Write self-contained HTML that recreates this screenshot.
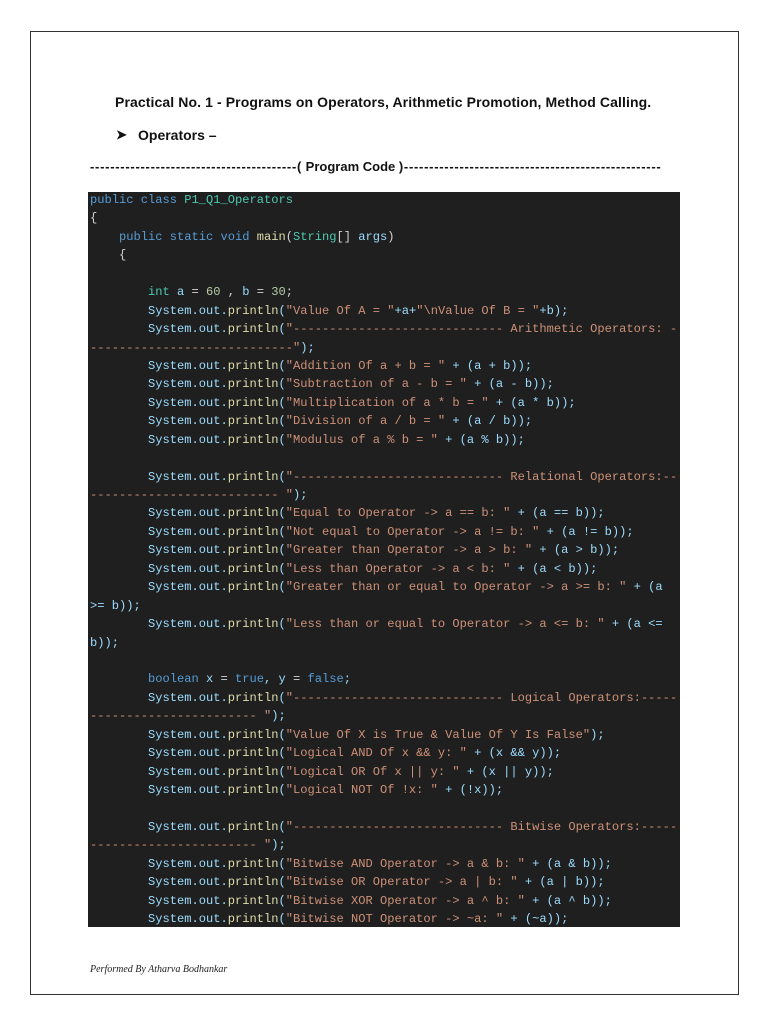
<!DOCTYPE html>
<html><head><meta charset="utf-8"><style>
body{margin:0;background:#fff;width:768px;height:1024px;position:relative;overflow:hidden}
.frame{position:absolute;left:30px;top:31px;width:707px;height:962px;border:1px solid #333}
.t{position:absolute;font-family:"Liberation Sans",sans-serif;font-weight:bold;color:#111;white-space:nowrap}
.code{position:absolute;left:88px;top:192px;width:592px;height:735px;background:#1f1f1f}
pre{position:absolute;left:90px;top:191px;margin:0;font-family:"Liberation Mono",monospace;font-size:12.08px;line-height:18.43px;color:#9cdcfe;white-space:pre}
.k{color:#569cd6}.c{color:#4ec9b0}.m{color:#dcdcaa}.s{color:#ce9178}.n{color:#b5cea8}.p{color:#d4d4d4}
.foot{position:absolute;left:90px;top:964px;font-family:"Liberation Serif",serif;font-style:italic;font-size:10px;color:#222}
</style></head><body>
<div class="frame"></div>
<div class="t" style="left:115px;top:94px;font-size:14px;letter-spacing:0.1px">Practical No. 1 - Programs on Operators, Arithmetic Promotion, Method Calling.</div>
<div class="t" style="left:116px;top:127px;font-size:13px">&#10148;</div>
<div class="t" style="left:138px;top:127px;font-size:14px">Operators –</div>
<div class="t" style="left:90px;top:159px;font-size:13px;letter-spacing:0.72px">-----------------------------------------(<span style="letter-spacing:0">&nbsp;Program Code&nbsp;</span>)---------------------------------------------------</div>
<div class="code"></div>
<pre><span class="k">public class</span> <span class="c">P1_Q1_Operators</span>
<span class="p">{</span>
    <span class="k">public static void</span> <span class="m">main</span><span class="p">(</span><span class="c">String</span><span class="p">[]</span> args<span class="p">)</span>
    <span class="p">{</span>

        <span class="c">int</span> a <span class="p">=</span> <span class="n">60</span> <span class="p">,</span> b <span class="p">=</span> <span class="n">30</span><span class="p">;</span>
        System.out.<span class="m">println</span>(<span class="s">"Value Of A = "</span>+a+<span class="s">"\nValue Of B = "</span>+b);
        System.out.<span class="m">println</span>(<span class="s">"----------------------------- Arithmetic Operators: -</span>
<span class="s">----------------------------"</span>);
        System.out.<span class="m">println</span>(<span class="s">"Addition Of a + b = "</span> + (a + b));
        System.out.<span class="m">println</span>(<span class="s">"Subtraction of a - b = "</span> + (a - b));
        System.out.<span class="m">println</span>(<span class="s">"Multiplication of a * b = "</span> + (a * b));
        System.out.<span class="m">println</span>(<span class="s">"Division of a / b = "</span> + (a / b));
        System.out.<span class="m">println</span>(<span class="s">"Modulus of a % b = "</span> + (a % b));

        System.out.<span class="m">println</span>(<span class="s">"----------------------------- Relational Operators:--</span>
<span class="s">-------------------------- "</span>);
        System.out.<span class="m">println</span>(<span class="s">"Equal to Operator -&gt; a == b: "</span> + (a == b));
        System.out.<span class="m">println</span>(<span class="s">"Not equal to Operator -&gt; a != b: "</span> + (a != b));
        System.out.<span class="m">println</span>(<span class="s">"Greater than Operator -&gt; a &gt; b: "</span> + (a &gt; b));
        System.out.<span class="m">println</span>(<span class="s">"Less than Operator -&gt; a &lt; b: "</span> + (a &lt; b));
        System.out.<span class="m">println</span>(<span class="s">"Greater than or equal to Operator -&gt; a &gt;= b: "</span> + (a
&gt;= b));
        System.out.<span class="m">println</span>(<span class="s">"Less than or equal to Operator -&gt; a &lt;= b: "</span> + (a &lt;=
b));

        <span class="k">boolean</span> x <span class="p">=</span> <span class="k">true</span>, y <span class="p">=</span> <span class="k">false</span>;
        System.out.<span class="m">println</span>(<span class="s">"----------------------------- Logical Operators:-----</span>
<span class="s">----------------------- "</span>);
        System.out.<span class="m">println</span>(<span class="s">"Value Of X is True &amp; Value Of Y Is False"</span>);
        System.out.<span class="m">println</span>(<span class="s">"Logical AND Of x &amp;&amp; y: "</span> + (x &amp;&amp; y));
        System.out.<span class="m">println</span>(<span class="s">"Logical OR Of x || y: "</span> + (x || y));
        System.out.<span class="m">println</span>(<span class="s">"Logical NOT Of !x: "</span> + (!x));

        System.out.<span class="m">println</span>(<span class="s">"----------------------------- Bitwise Operators:-----</span>
<span class="s">----------------------- "</span>);
        System.out.<span class="m">println</span>(<span class="s">"Bitwise AND Operator -&gt; a &amp; b: "</span> + (a &amp; b));
        System.out.<span class="m">println</span>(<span class="s">"Bitwise OR Operator -&gt; a | b: "</span> + (a | b));
        System.out.<span class="m">println</span>(<span class="s">"Bitwise XOR Operator -&gt; a ^ b: "</span> + (a ^ b));
        System.out.<span class="m">println</span>(<span class="s">"Bitwise NOT Operator -&gt; ~a: "</span> + (~a));</pre>
<div class="foot">Performed By Atharva Bodhankar</div>
</body></html>
